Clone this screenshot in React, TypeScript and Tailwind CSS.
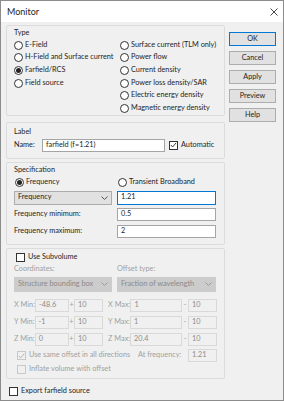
import React from 'react'

const font = { fontFamily: 'Lato, "Noto Sans", "Liberation Sans", sans-serif' }

function Radio({ label, checked = false, className = '' }: { label: string; checked?: boolean; className?: string }) {
  return (
    <div className={`flex items-center h-[12.6px] ${className}`}>
      <span className="w-[9px] h-[9px] rounded-full border border-[#333] bg-white flex items-center justify-center shrink-0">
        {checked && <span className="w-[5px] h-[5px] rounded-full bg-[#222]" />}
      </span>
      <span className="ml-[2px]">{label}</span>
    </div>
  )
}

function Check({ label, checked = false, disabled = false }: { label: string; checked?: boolean; disabled?: boolean }) {
  return (
    <div className={`flex items-center ${disabled ? 'text-[#a0a0a0]' : ''}`}>
      <span
        className={`w-[9px] h-[9px] border flex items-center justify-center shrink-0 ${
          disabled ? 'border-[#c8c8c8] bg-[#f0f0f0]' : 'border-[#333] bg-white'
        }`}
      >
        {checked && (
          <svg width="8" height="8" viewBox="0 0 8 8">
            <path d="M1 4 L3 6.2 L7 1.5" fill="none" stroke={disabled ? '#b0b0b0' : '#222'} strokeWidth="1" />
          </svg>
        )}
      </span>
      <span className="ml-[3px]">{label}</span>
    </div>
  )
}

function Btn({ label, primary = false }: { label: string; primary?: boolean }) {
  return (
    <div
      className={`h-[14px] w-[47px] flex items-center justify-center bg-[#e1e1e1] border ${
        primary ? 'border-[#0078d7]' : 'border-[#adadad]'
      }`}
    >
      {label}
    </div>
  )
}

function Input({ value, className = '', disabled = false, focused = false }: { value: string; className?: string; disabled?: boolean; focused?: boolean }) {
  return (
    <div
      className={`h-[13px] flex items-center px-[3px] border overflow-hidden shrink-0 ${
        disabled
          ? 'border-[#d9d9d9] bg-[#f0f0f0] text-[#8c8c8c]'
          : focused
          ? 'border-[#0078d7] bg-white'
          : 'border-[#a5a5a5] bg-white'
      } ${className}`}
    >
      {value}
    </div>
  )
}

function Combo({ value, disabled = false, className = '' }: { value: string; disabled?: boolean; className?: string }) {
  return (
    <div
      className={`h-[14px] flex items-center justify-between px-[3px] border overflow-hidden shrink-0 ${
        disabled ? 'bg-[#cccccc] border-[#cccccc] text-[#8a8a8a]' : 'bg-[#e1e1e1] border-[#adadad]'
      } ${className}`}
    >
      <span>{value}</span>
      <svg width="7" height="4" viewBox="0 0 7 4" className="shrink-0">
        <path d="M0.5 0.5 L3.5 3.5 L6.5 0.5" fill="none" stroke={disabled ? '#9a9a9a' : '#555'} strokeWidth="1" />
      </svg>
    </div>
  )
}

function Panel({ children, className = '' }: { children: React.ReactNode; className?: string }) {
  return <div className={`border border-[#dcdcdc] rounded-[2px] px-[7px] ${className}`}>{children}</div>
}

function RangeRow({ axis, min, max }: { axis: string; min: string; max: string }) {
  return (
    <div className="flex items-center h-[17px] text-[#a0a0a0]">
      <span className="w-[24px]">{axis} Min:</span>
      <Input value={min} disabled className="w-[34px]" />
      <span className="w-[11px] text-center">+</span>
      <Input value="10" disabled className="w-[29px]" />
      <span className="w-[34px] pl-[5px]">{axis} Max:</span>
      <Input value={max} disabled className="w-[52px]" />
      <span className="w-[12px] text-center">-</span>
      <Input value="10" disabled className="w-[29px]" />
    </div>
  )
}

export default function App() {
  return (
    <div style={font} className="w-[284px] h-[401px] bg-[#f0f0f0] border border-[#8c8c8c] text-[7.3px] text-[#1e1e1e] flex flex-col overflow-hidden whitespace-nowrap">
      <div className="h-[21px] bg-white flex items-center justify-between pl-[6px] pr-[5px] shrink-0">
        <span className="text-[9px]">Monitor</span>
        <svg width="8" height="8" viewBox="0 0 8 8">
          <path d="M0.5 0.5 L7.5 7.5 M7.5 0.5 L0.5 7.5" stroke="#333" strokeWidth="0.9" />
        </svg>
      </div>

      <div className="flex pl-[5px] pt-[3px]">
        <div className="w-[219px] flex flex-col">
          <Panel className="h-[91px] pt-[1px]">
            <div className="h-[12px] flex items-center">Type</div>
            <div className="flex">
              <div className="w-[106px]">
                <Radio label="E-Field" />
                <Radio label="H-Field and Surface current" />
                <Radio label="Farfield/RCS" checked />
                <Radio label="Field source" />
              </div>
              <div>
                <Radio label="Surface current (TLM only)" />
                <Radio label="Power flow" />
                <Radio label="Current density" />
                <Radio label="Power loss density/SAR" />
                <Radio label="Electric energy density" />
                <Radio label="Magnetic energy density" />
              </div>
            </div>
          </Panel>

          <Panel className="h-[37px] mt-[6px] pt-[3px]">
            <div className="h-[12px] flex items-center">Label</div>
            <div className="flex items-center h-[14px]">
              <span className="w-[28px]">Name:</span>
              <Input value="farfield (f=1.21)" className="w-[123px]" />
              <span className="ml-[4px]">
                <Check label="Automatic" checked />
              </span>
            </div>
          </Panel>

          <Panel className="h-[83px] mt-[3px] pt-[1px]">
            <div className="h-[12px] flex items-center">Specification</div>
            <div className="flex h-[12px] items-center">
              <Radio label="Frequency" checked className="w-[104px] pl-[1px]" />
              <Radio label="Transient Broadband" />
            </div>
            <div className="flex items-center h-[17px] mt-[1px]">
              <Combo value="Frequency" className="w-[98px]" />
              <Input value="1.21" focused className="ml-[5px] w-[99px] h-[14px]" />
            </div>
            <div className="flex items-center h-[17px]">
              <span className="w-[103px]">Frequency minimum:</span>
              <Input value="0.5" className="w-[99px]" />
            </div>
            <div className="flex items-center h-[17px]">
              <span className="w-[103px]">Frequency maximum:</span>
              <Input value="2" className="w-[99px]" />
            </div>
          </Panel>

          <Panel className="h-[131px] mt-[3px] pt-[2px]">
            <div className="h-[12px] flex items-center pl-[2px]">
              <Check label="Use Subvolume" />
            </div>
            <div className="flex h-[11px] items-center text-[#a0a0a0] mt-[1px]">
              <span className="w-[103px]">Coordinates:</span>
              <span>Offset type:</span>
            </div>
            <div className="flex items-center h-[18px]">
              <Combo value="Structure bounding box" disabled className="w-[98px] h-[15px]" />
              <Combo value="Fraction of wavelength" disabled className="ml-[5px] w-[99px] h-[15px]" />
            </div>
            <div className="h-[4px]" />
            <RangeRow axis="X" min="-48.6" max="1" />
            <RangeRow axis="Y" min="-1" max="1" />
            <RangeRow axis="Z" min="0" max="20.4" />
            <div className="flex items-center h-[15px] text-[#a0a0a0]">
              <span className="w-[124px] pl-[3px]">
                <Check label="Use same offset in all directions" checked disabled />
              </span>
              <span className="w-[50px]">At frequency:</span>
              <Input value="1.21" disabled className="w-[29px]" />
            </div>
            <div className="flex items-center h-[12px] pl-[3px]">
              <Check label="Inflate volume with offset" disabled />
            </div>
          </Panel>

          <div className="flex items-center h-[12px] mt-[6px] pl-[3px]">
            <Check label="Export farfield source" />
          </div>
        </div>

        <div className="ml-[4px] pt-[7px] flex flex-col gap-[5px]">
          <Btn label="OK" primary />
          <Btn label="Cancel" />
          <Btn label="Apply" />
          <Btn label="Preview" />
          <Btn label="Help" />
        </div>
      </div>
    </div>
  )
}
